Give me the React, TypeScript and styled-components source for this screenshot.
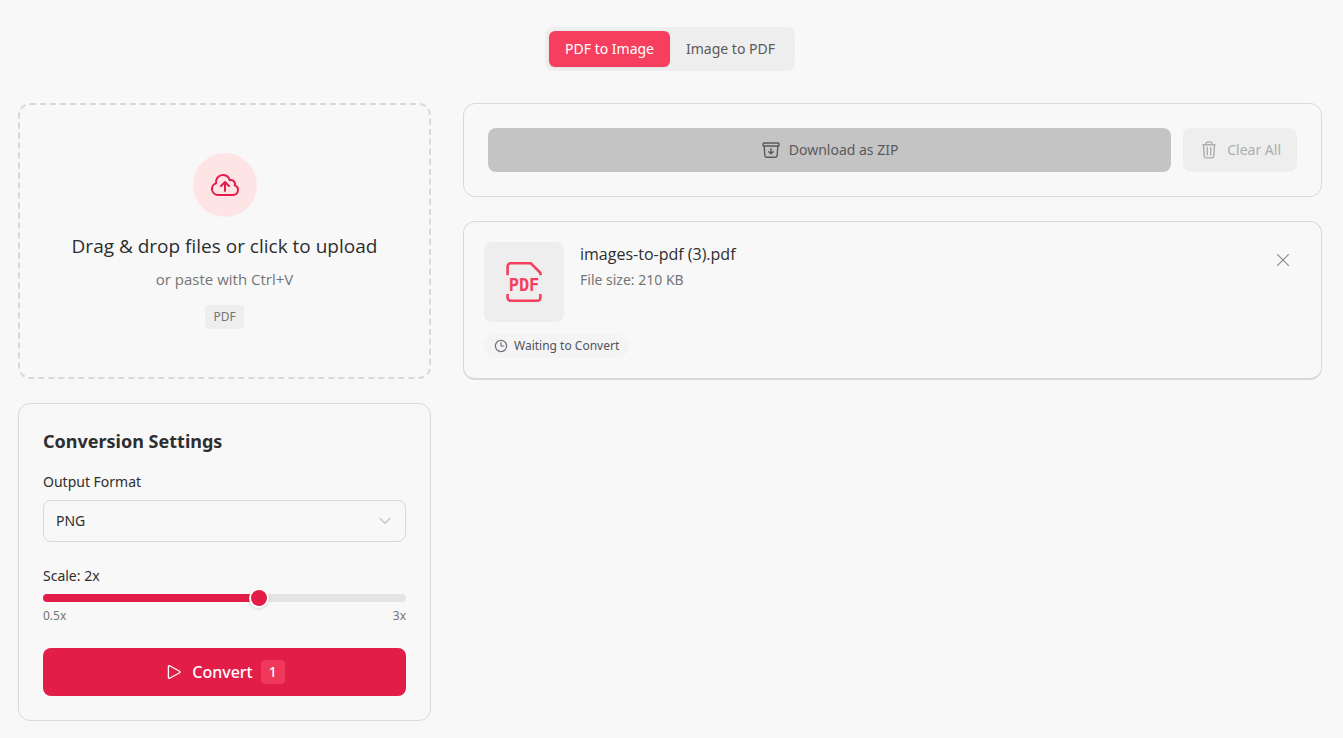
import React, { useState } from "react";
import styled, { createGlobalStyle } from "styled-components";

const GlobalStyle = createGlobalStyle`
  *, *::before, *::after { box-sizing: border-box; }
  body {
    margin: 0;
    background: #f8f8f8;
    color: #2e2e2e;
    font-family: "Noto Sans", "Open Sans", sans-serif;
    font-size: 14px;
    line-height: 20px;
  }
  button, select, input { font: inherit; color: inherit; margin: 0; }
  h2, h3, p { margin: 0; }
`;

const Page = styled.main`
  display: flex;
  flex-direction: column;
  gap: 32px;
  padding: 27px 21px 17px 18px;
`;

const Tabs = styled.div`
  align-self: center;
  display: flex;
  padding: 4px;
  border-radius: 8px;
  background: #eeeeee;
`;

const Tab = styled.button<{ $active?: boolean }>`
  height: 36px;
  padding: 0 16px;
  border: 0;
  border-radius: 6px;
  background: ${(p) => (p.$active ? "#f63f5e" : "transparent")};
  color: ${(p) => (p.$active ? "#ffffff" : "#5a5a5a")};
  box-shadow: ${(p) => (p.$active ? "0 1px 2px rgba(0, 0, 0, 0.06)" : "none")};
  cursor: pointer;
`;

const Columns = styled.div`
  display: grid;
  grid-template-columns: minmax(0, 413fr) minmax(0, 859fr);
  gap: 32px;
  align-items: start;
`;

const Column = styled.div`
  display: flex;
  flex-direction: column;
  gap: 24px;
`;

const DropZone = styled.button`
  display: flex;
  flex-direction: column;
  align-items: center;
  width: 100%;
  padding: 48px;
  border: 2px dashed #d9d9d9;
  border-radius: 12px;
  background: transparent;
  cursor: pointer;
`;

const UploadCircle = styled.span`
  display: grid;
  place-items: center;
  width: 64px;
  height: 64px;
  margin-bottom: 16px;
  border-radius: 50%;
  background: #ffe4e6;
  color: #e11d48;
`;

const DropTitle = styled.span`
  margin-bottom: 10px;
  font-family: "Open Sans", "Noto Sans", sans-serif;
  font-size: 19px;
  line-height: 26px;
`;

const DropHint = styled.span`
  margin-bottom: 16px;
  color: #757575;
  font-family: "Open Sans", "Noto Sans", sans-serif;
  font-size: 15px;
`;

const FormatTag = styled.span`
  padding: 4px 8px;
  border-radius: 4px;
  background: #eeeeee;
  color: #757575;
  font-size: 12px;
  line-height: 16px;
`;

const Card = styled.section`
  padding: 24px;
  border: 1px solid #d9d9d9;
  border-radius: 12px;
`;

const CardTitle = styled.h2`
  margin-bottom: 18px;
  font-size: 18px;
  font-weight: 700;
  line-height: 26px;
`;

const Label = styled.label`
  display: block;
  margin-bottom: 8px;
`;

const SelectBox = styled.div`
  display: grid;
  align-items: center;
  margin-bottom: 24px;

  > * { grid-area: 1 / 1; }
  > svg { justify-self: end; margin-right: 14px; pointer-events: none; color: #bdbdbd; }
`;

const Select = styled.select`
  appearance: none;
  width: 100%;
  height: 42px;
  padding: 0 12px;
  border: 1px solid #d9d9d9;
  border-radius: 8px;
  background: transparent;
`;

const Slider = styled.input`
  appearance: none;
  display: block;
  width: 100%;
  height: 8px;
  border-radius: 4px;
  background: linear-gradient(
    to right,
    #e11d48 ${(p) => ((Number(p.value) - 0.5) / 2.5) * 100}%,
    #e4e4e7 ${(p) => ((Number(p.value) - 0.5) / 2.5) * 100}%
  );

  &::-webkit-slider-thumb {
    appearance: none;
    width: 20px;
    height: 20px;
    border: 2px solid #ffffff;
    border-radius: 50%;
    background: #e11d48;
    box-shadow: 0 1px 3px rgba(0, 0, 0, 0.15);
  }
`;

const SliderEnds = styled.div`
  display: flex;
  justify-content: space-between;
  margin: 6px 0 24px;
  color: #757575;
  font-size: 12px;
  line-height: 16px;
`;

const ConvertButton = styled.button`
  display: flex;
  align-items: center;
  justify-content: center;
  gap: 8px;
  width: 100%;
  height: 48px;
  border: 0;
  border-radius: 8px;
  background: #e11d48;
  color: #ffffff;
  font-size: 16px;
  font-weight: 500;
  cursor: pointer;
`;

const Count = styled.span`
  padding: 2px 8px;
  border-radius: 4px;
  background: #f0385a;
  font-size: 14px;
`;

const ActionBar = styled(Card)`
  display: flex;
  gap: 12px;
`;

const ActionButton = styled.button<{ $grow?: boolean }>`
  display: flex;
  flex: ${(p) => (p.$grow ? "1" : "none")};
  align-items: center;
  justify-content: center;
  gap: 8px;
  height: 44px;
  padding: 0 16px;
  border: 0;
  border-radius: 8px;
  background: ${(p) => (p.$grow ? "#c4c4c4" : "#eeeeee")};
  color: ${(p) => (p.$grow ? "#5a5a5a" : "#adadad")};
`;

const FileCard = styled(Card)`
  display: flex;
  flex-direction: column;
  align-items: flex-start;
  gap: 12px;
  padding: 20px;
  border-bottom-width: 2px;
`;

const FileRow = styled.div`
  display: flex;
  gap: 16px;
  width: 100%;
`;

const Thumb = styled.div`
  display: grid;
  place-items: center;
  width: 80px;
  height: 80px;
  border-radius: 8px;
  background: #eeeeee;
  color: #f63f5e;
`;

const FileInfo = styled.div`
  flex: 1;
  min-width: 0;
`;

const FileName = styled.h3`
  margin-bottom: 4px;
  font-family: "Open Sans", "Noto Sans", sans-serif;
  font-size: 16px;
  font-weight: 400;
  line-height: 24px;
`;

const FileSize = styled.p`
  color: #757575;
`;

const RemoveButton = styled.button`
  display: grid;
  place-items: center;
  width: 36px;
  height: 36px;
  padding: 0;
  border: 0;
  background: transparent;
  color: #8a8a8a;
  cursor: pointer;
`;

const Status = styled.div`
  display: flex;
  align-items: center;
  gap: 6px;
  padding: 4px 10px;
  border-radius: 12px;
  background: #f4f4f5;
  color: #52525b;
  font-size: 12px;
  line-height: 16px;

  > svg { color: #71717a; }
`;

const line = {
  fill: "none",
  stroke: "currentColor",
  strokeLinecap: "round",
  strokeLinejoin: "round",
} as const;

const CloudUploadIcon = () => (
  <svg width="32" height="32" viewBox="0 0 24 24" strokeWidth="1.5" {...line} aria-hidden="true">
    <path d="M12 16.5V9.75m0 0 3 3m-3-3-3 3M6.75 19.5a4.5 4.5 0 0 1-1.41-8.775 5.25 5.25 0 0 1 10.233-2.33 3 3 0 0 1 3.758 3.848A3.752 3.752 0 0 1 18 19.5H6.75Z" />
  </svg>
);

const ArchiveIcon = () => (
  <svg width="20" height="20" viewBox="0 0 20 20" strokeWidth="1.4" {...line} aria-hidden="true">
    <rect x="2" y="3" width="16" height="3" rx="0.8" />
    <path d="M3.2 6l.6 9.3a2 2 0 0 0 2 1.9h8.4a2 2 0 0 0 2-1.9l.6-9.3M10 8.8v5m0 0 2.3-2.1M10 13.8l-2.3-2.1" />
  </svg>
);

const TrashIcon = () => (
  <svg width="20" height="20" viewBox="0 0 20 20" strokeWidth="1.4" {...line} aria-hidden="true">
    <path d="M4 4.7h12M4.5 4.7l.7 11.4a2 2 0 0 0 2 1.8h5.6a2 2 0 0 0 2-1.8l.7-11.4M6.7 4.5c.3-1.7 1-2.6 2.3-2.6h2c1.3 0 2 .9 2.3 2.6M8.3 7.5v7.5M11.7 7.5v7.5" />
  </svg>
);

const PdfIcon = () => (
  <svg width="40" height="40" viewBox="0 0 40 40" fill="none" stroke="currentColor" strokeWidth="2.6" aria-hidden="true">
    <path d="M3.6 13.3V4.3a3 3 0 0 1 3-3h20.2l9.6 9.4v2.6M3.6 32v3.7a3 3 0 0 0 3 3h26.8a3 3 0 0 0 3-3V32" />
    <text x="20" y="29" textAnchor="middle" fill="currentColor" stroke="none" fontFamily="DejaVu Sans Mono, monospace" fontWeight="700" fontSize="17">PDF</text>
  </svg>
);

const ClockIcon = () => (
  <svg width="14" height="14" viewBox="0 0 14 14" strokeWidth="1.2" {...line} aria-hidden="true">
    <circle cx="7" cy="7" r="5.6" />
    <path d="M7 3.6V7h2.8" />
  </svg>
);

const CloseIcon = () => (
  <svg width="20" height="20" viewBox="0 0 20 20" strokeWidth="1.2" {...line} aria-hidden="true">
    <path d="M4.6 4.6l10.8 10.8M15.4 4.6L4.6 15.4" />
  </svg>
);

const ChevronIcon = () => (
  <svg width="14" height="14" viewBox="0 0 14 14" strokeWidth="1.2" {...line} aria-hidden="true">
    <path d="M2 4.4l5 5 5-5" />
  </svg>
);

const PlayIcon = () => (
  <svg width="20" height="20" viewBox="0 0 20 20" strokeWidth="1.3" {...line} aria-hidden="true">
    <path d="M4.4 4.5v11c0 .7.6 1 1.2.7l10-5.5c.6-.3.6-1.1 0-1.4l-10-5.5c-.6-.3-1.2 0-1.2.7Z" />
  </svg>
);

export default function App() {
  const [format, setFormat] = useState("PNG");
  const [scale, setScale] = useState(2);

  return (
    <>
      <GlobalStyle />
      <Page>
        <Tabs role="tablist">
          <Tab $active role="tab" aria-selected="true">PDF to Image</Tab>
          <Tab role="tab" aria-selected="false">Image to PDF</Tab>
        </Tabs>

        <Columns>
          <Column>
            <DropZone type="button">
              <UploadCircle><CloudUploadIcon /></UploadCircle>
              <DropTitle>Drag &amp; drop files or click to upload</DropTitle>
              <DropHint>or paste with Ctrl+V</DropHint>
              <FormatTag>PDF</FormatTag>
            </DropZone>

            <Card>
              <CardTitle>Conversion Settings</CardTitle>
              <Label htmlFor="format">Output Format</Label>
              <SelectBox>
                <Select id="format" value={format} onChange={(e) => setFormat(e.target.value)}>
                  <option>PNG</option>
                  <option>JPG</option>
                </Select>
                <ChevronIcon />
              </SelectBox>
              <Label htmlFor="scale">Scale: {scale}x</Label>
              <Slider
                id="scale"
                type="range"
                min={0.5}
                max={3}
                step={0.5}
                value={scale}
                onChange={(e) => setScale(Number(e.target.value))}
              />
              <SliderEnds>
                <span>0.5x</span>
                <span>3x</span>
              </SliderEnds>
              <ConvertButton>
                <PlayIcon />
                Convert
                <Count>1</Count>
              </ConvertButton>
            </Card>
          </Column>

          <Column>
            <ActionBar>
              <ActionButton $grow disabled><ArchiveIcon />Download as ZIP</ActionButton>
              <ActionButton disabled><TrashIcon />Clear All</ActionButton>
            </ActionBar>

            <FileCard>
              <FileRow>
                <Thumb><PdfIcon /></Thumb>
                <FileInfo>
                  <FileName>images-to-pdf (3).pdf</FileName>
                  <FileSize>File size: 210 KB</FileSize>
                </FileInfo>
                <RemoveButton aria-label="Remove file"><CloseIcon /></RemoveButton>
              </FileRow>
              <Status><ClockIcon />Waiting to Convert</Status>
            </FileCard>
          </Column>
        </Columns>
      </Page>
    </>
  );
}
